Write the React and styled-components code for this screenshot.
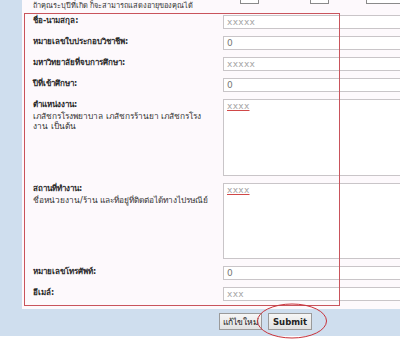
import React from "react";
import styled, { createGlobalStyle } from "styled-components";

const Global = createGlobalStyle`
  html, body { margin: 0; padding: 0; background: #ffffff; }
  body { font-family: Tahoma, "DejaVu Sans", "Noto Sans", sans-serif; }
`;

const Page = styled.div`
  position: relative;
  width: 400px;
  height: 347px;
  overflow: hidden;
  background: #ffffff;
`;

const Frame = styled.div`
  background: #cfdeee;
  padding-left: 22px;
`;

const Panel = styled.div`
  background: #fdf9fc;
  overflow: hidden;
  padding-bottom: 8px;
`;

const HintRow = styled.div`
  display: flex;
  align-items: flex-start;
  height: 15px;
  padding-left: 11px;
`;

const Hint = styled.div`
  flex: 0 0 207px;
  font-size: 7.4px;
  line-height: 11px;
  color: #333;
  white-space: nowrap;
`;

const StubBox = styled.div`
  flex: 0 0 auto;
  margin-top: -10px;
  height: 12px;
  width: ${p => p.w}px;
  margin-left: ${p => p.ml}px;
  border: 1px solid #8a8a8a;
  background: #fff;
`;

const Form = styled.div`
  display: grid;
  grid-template-columns: 190px 230px;
  row-gap: 7px;
  padding-left: 11px;
`;

const LabelCell = styled.div`
  padding-top: 1px;
  font-size: 8px;
  line-height: 10.5px;
  color: #2a2a2a;
  white-space: nowrap;
`;

const LabelText = styled.div`
  font-weight: bold;
`;

const Note = styled.div`
  font-weight: normal;
  font-size: 8.3px;
  color: #333;
`;

const Field = styled.div`
  box-sizing: border-box;
  height: ${p => p.h || 14}px;
  border: 1px solid #c9c5c8;
  background: #ffffff;
  font-size: 9px;
  line-height: 12px;
  padding-left: 3px;
  color: ${p => (p.dim ? "#a6a6a6" : "#777")};
  letter-spacing: 0.3px;
`;

const Squiggle = styled.span`
  text-decoration: underline;
  text-decoration-color: #d04848;
  text-underline-offset: 1px;
`;

const ButtonBar = styled.div`
  display: flex;
  gap: 6px;
  height: 27px;
  box-sizing: border-box;
  padding: 4px 0 0 219px;
  background: #cfdeee;
`;

const Button = styled.button`
  box-sizing: border-box;
  height: 17px;
  width: ${p => p.w}px;
  padding: 0;
  border: 1px solid #9a9a9a;
  background: linear-gradient(#f6f6f6, #e2e2e2);
  font-family: inherit;
  font-size: 8.5px;
  font-weight: ${p => (p.strong ? "bold" : "normal")};
  color: #222;
  overflow: hidden;
  white-space: nowrap;
`;

const Annotation = styled.div`
  position: absolute;
  left: 24px;
  top: 13px;
  width: 316px;
  height: 293px;
  box-sizing: border-box;
  border: 1px solid #c9545c;
  pointer-events: none;
`;

const Ring = styled.svg`
  position: absolute;
  left: 255px;
  top: 302px;
  pointer-events: none;
`;

const rows = [
  { label: "ชื่อ-นามสกุล:", value: "xxxxx", dim: true },
  { label: "หมายเลขใบประกอบวิชาชีพ:", value: "0" },
  { label: "มหาวิทยาลัยที่จบการศึกษา:", value: "xxxxx", dim: true },
  { label: "ปีที่เข้าศึกษา:", value: "0" },
  {
    label: "ตำแหน่งงาน:",
    note: ["เภสัชกรโรงพยาบาล เภสัชกรร้านยา เภสัชกรโรง", "งาน เป็นต้น"],
    value: "xxxx",
    dim: true,
    area: 77,
  },
  {
    label: "สถานที่ทำงาน:",
    note: ["ชื่อหน่วยงาน/ร้าน และที่อยู่ที่ติดต่อได้ทางไปรษณีย์"],
    value: "xxxx",
    dim: true,
    area: 76,
  },
  { label: "หมายเลขโทรศัพท์:", value: "0" },
  { label: "อีเมล์:", value: "xxx", dim: true },
];

export default function App() {
  return (
    <Page>
      <Global />
      <Frame>
        <Panel>
          <HintRow>
            <Hint>ถ้าคุณระบุปีที่เกิด ก็จะสามารถแสดงอายุของคุณได้</Hint>
            <StubBox w={17} ml={0} />
            <StubBox w={17} ml={51} />
            <StubBox w={60} ml={37} />
          </HintRow>
          <Form>
            {rows.map(r => (
              <React.Fragment key={r.label}>
                <LabelCell>
                  <LabelText>{r.label}</LabelText>
                  {r.note && r.note.map(line => <Note key={line}>{line}</Note>)}
                </LabelCell>
                <Field h={r.area} dim={r.dim}>
                  {r.area ? <Squiggle>{r.value}</Squiggle> : r.value}
                </Field>
              </React.Fragment>
            ))}
          </Form>
        </Panel>
      </Frame>
      <ButtonBar>
        <Button w={43}>แก้ไขใหม่</Button>
        <Button w={44} strong>Submit</Button>
      </ButtonBar>
      <Annotation />
      <Ring width="76" height="40" viewBox="0 0 76 40">
        <ellipse cx="37" cy="19" rx="34.5" ry="17" fill="none" stroke="#c8323a" strokeWidth="1" />
      </Ring>
    </Page>
  );
}
